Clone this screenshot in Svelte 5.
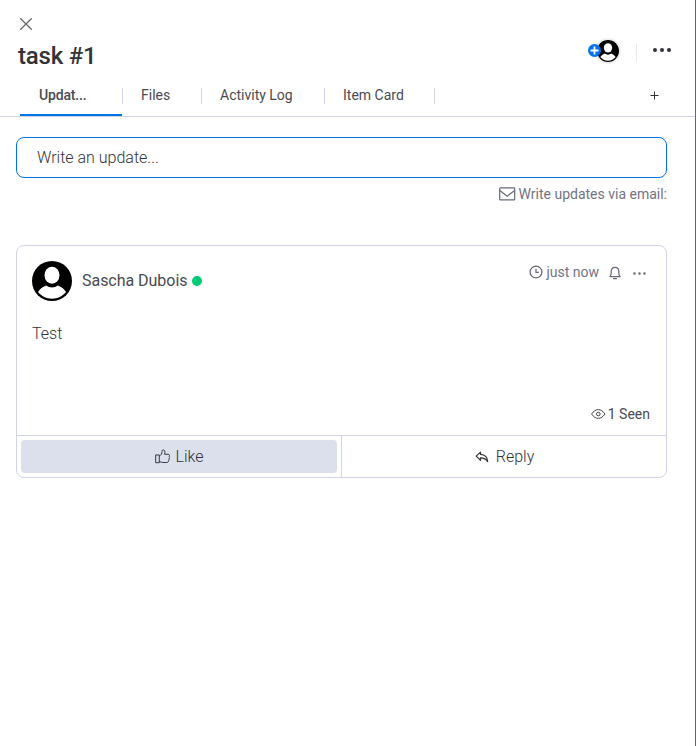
<script>
  const tabs = [
    { label: 'Updat...', width: 103, active: true },
    { label: 'Files', width: 79 },
    { label: 'Activity Log', width: 123 },
    { label: 'Item Card', width: 110 }
  ];
</script>

{#snippet avatar(size)}
  <svg class="avatar" width={size} height={size} viewBox="0 0 40 40">
    <circle cx="20" cy="20" r="20" fill="#000" />
    <ellipse cx="20" cy="14.3" rx="7.5" ry="8.5" fill="#fff" />
    <path d="M6 31C8.2 28 10.5 26 14 24.6Q20 28.6 26 24.6C29.500 26 31.800 28 34 31C30.500 35.300 25.500 37.700 20 37.700S9.500 35.300 6 31Z" fill="#fff" />
  </svg>
{/snippet}

<main class="panel">
  <header>
    <button class="close" aria-label="Close">
      <svg width="12" height="12" viewBox="0 0 12 12"><path d="M.3.3 11.700 11.700M11.700.3.3 11.700" stroke="#676767" stroke-width="1.250" /></svg>
    </button>
    <div class="title-row">
      <h1>task #1</h1>
      <div class="people">
        <span class="ring">{@render avatar(22)}</span>
        <svg class="add" width="13" height="13" viewBox="0 0 13 13"><circle cx="6.500" cy="6.500" r="6.500" fill="#0073ea" /><path d="M6.500 2.500v8M2.500 6.500h8" stroke="#fff" stroke-width="1.800" /></svg>
      </div>
      <span class="rule"></span>
      <svg class="more" width="18" height="4" viewBox="0 0 18 4" fill="#323338"><circle cx="2" cy="2" r="2" /><circle cx="9" cy="2" r="2" /><circle cx="16" cy="2" r="2" /></svg>
    </div>
  </header>

  <nav>
    {#each tabs as tab}
      <div class="tab" class:active={tab.active} style="width: {tab.width}px"><span>{tab.label}</span></div>
    {/each}
    <svg class="plus" width="9" height="9" viewBox="0 0 9 9"><path d="M4.500.5v8M.5 4.500h8" stroke="#323338" stroke-width="1" /></svg>
  </nav>

  <div class="content">
    <div class="composer">Write an update...</div>
    <div class="email">
      <svg width="17" height="14" viewBox="0 0 17 14" fill="none" stroke="#676879" stroke-width="1.200" stroke-linejoin="round"><rect x=".7" y=".9" width="15" height="12" rx=".7" /><path d="M.8 3.500 8.200 9.200 15.700 3.500" /></svg>
      <span>Write updates via email:</span>
    </div>

    <article>
      <div class="post">
        <div class="post-head">
          {@render avatar(40)}
          <span class="name">Sascha Dubois</span>
          <span class="online"></span>
          <div class="meta">
            <svg width="14" height="14" viewBox="0 0 14 14" fill="none" stroke="#676879" stroke-width="1.250"><circle cx="7" cy="7" r="5.900" /><path d="M7 3.800V7.300H9.800" /></svg>
            <span class="time">just now</span>
            <svg class="bell" width="12" height="14" viewBox="0 0 12 14" fill="none" stroke="#676879" stroke-width="1.250" stroke-linejoin="round"><path d="M.9 10.500C1.900 9.500 2.200 8.500 2.200 7V5.400C2.200 3 3.700 1.400 6 1.400S9.800 3 9.800 5.400V7C9.800 8.500 10.100 9.500 11.100 10.500Z" /><path d="M4.500 12.500H7.500" stroke-linecap="round" /></svg>
            <svg class="dots" width="13" height="3" viewBox="0 0 13 3" fill="#676879"><circle cx="1.500" cy="1.500" r="1.200" /><circle cx="6.500" cy="1.500" r="1.200" /><circle cx="11.500" cy="1.500" r="1.200" /></svg>
          </div>
        </div>
        <p>Test</p>
        <div class="seen">
          <svg width="15" height="10" viewBox="0 0 15 10" fill="none" stroke="#323338" stroke-width=".9"><path d="M.6 5C2.500 2.200 4.700.6 7.300.6S12 2.200 13.900 5C12 7.800 9.900 9.400 7.300 9.400S2.500 7.800.6 5Z" /><circle cx="7.300" cy="5" r="1.800" /></svg>
          <span>1 Seen</span>
        </div>
      </div>
      <footer>
        <div class="action like">
          <button class="liked">
            <svg width="15" height="15" viewBox="0 0 15.500 15" fill="none" stroke="#323338" stroke-width="1" stroke-linejoin="round"><path d="M.7 5.900H4.400V13.900H.7ZM4.400 7.100C6.400 6 7.300 4.500 7.300 2.400C7.300 1 7.800.6 8.700.7C10.200.9 10.700 2.600 9.900 5.200H13.500C15 5.200 15.300 6.300 14.700 7.400C15.300 8.200 15.200 9.100 14.500 9.700C14.800 10.700 14.600 11.300 13.900 11.800C14 13.100 13.300 13.700 12.100 13.700H8C6.400 13.700 5.700 12.700 4.400 12.700" /></svg>
            <span>Like</span>
          </button>
        </div>
        <div class="action reply">
          <svg width="14" height="12" viewBox="0 0 14 12" fill="none" stroke="#323338" stroke-width="1.200" stroke-linejoin="round"><path d="M5.500 1.100 1.200 5.100 5.500 9.300V6.900C8.800 6.800 10.900 7.700 12.700 10.700C12.500 6.300 9.800 3.500 5.500 3.300Z" /></svg>
          <span>Reply</span>
        </div>
      </footer>
    </article>
  </div>
</main>

<style>
  :global(body) { background: #fff; }
  * { box-sizing: border-box; }
  svg { display: block; flex: none; }
  button { border: 0; padding: 0; background: none; font: inherit; color: inherit; }
  .panel { width: 696px; height: 746px; border-right: 1px solid #666; font-family: Roboto, sans-serif; font-size: 14px; color: #323338; overflow: hidden; }
  header { height: 75px; padding: 18px 23px 0 18px; }
  .close { display: block; margin-left: 2px; height: 12px; }
  .title-row { display: flex; align-items: center; height: 40px; }
  h1 { margin: 11px auto 0 0; font-size: 24px; line-height: 32px; font-weight: 500; letter-spacing: -.2px; }
  .people { position: relative; width: 33px; height: 26px; margin: 1px 15px 0 0; }
  .ring { position: absolute; right: 0; top: 0; padding: 2px; border-radius: 50%; background: #efefef; }
  .add { position: absolute; left: 0; top: 6px; }
  .rule { width: 1px; height: 18px; margin: 6px 16px 0 0; background: #e8e9ef; }
  .more { margin-right: 1px; }
  nav { display: flex; align-items: center; height: 42px; padding: 0 36px 0 20px; border-bottom: 1px solid #d0d4e4; }
  .tab { position: relative; height: 41px; padding-left: 18px; line-height: 41px; color: #4a4b51; }
  .tab.active { padding-left: 19px; font-weight: 500; letter-spacing: -.18px; }
  .tab::after { content: ''; position: absolute; right: 0; top: 13px; width: 1px; height: 16px; background: #d0d4e4; }
  .tab.active::before { content: ''; position: absolute; left: 0; right: 1px; bottom: 0; height: 2px; background: #0073ea; }
  .plus { margin-left: auto; margin-bottom: 1px; }
  .content { padding: 20px 28px 0 16px; }
  .composer { height: 41px; padding-left: 20px; border: 1px solid #0073ea; border-radius: 8px; font-size: 16px; line-height: 39px; font-weight: 300; }
  .email { display: flex; justify-content: flex-end; align-items: center; gap: 3px; height: 32px; color: #737483; }
  article { margin-top: 35px; height: 233px; border: 1px solid #d0d4e4; border-radius: 8px; font-size: 16px; }
  .post { height: 189px; padding: 15px 16px 0 15px; }
  .post-head { display: flex; align-items: center; height: 40px; }
  .name { margin-left: 10px; line-height: 22px; color: #4a4b51; letter-spacing: -.03px; }
  .online { width: 10px; height: 10px; margin-left: 4px; border-radius: 50%; background: #00ca72; }
  .meta { display: flex; align-items: center; margin: -18px 4px 0 auto; color: #737483; font-size: 14px; line-height: 16px; }
  .time { margin: 0 10px 0 3px; }
  .bell { margin-right: 12px; }
  .bell, .dots { position: relative; top: 1px; }
  p { margin: 21px 0 0; line-height: 24px; font-weight: 300; }
  .seen { display: flex; align-items: center; justify-content: flex-end; gap: 2px; margin-top: 58px; height: 20px; font-size: 14px; color: #4a4b51; }
  footer { display: flex; height: 42px; border-top: 1px solid #d0d4e4; font-weight: 300; }
  .action { display: flex; align-items: center; justify-content: center; }
  .like { width: 325px; padding: 4px; border-right: 1px solid #d0d4e4; }
  .liked { display: flex; align-items: center; justify-content: center; gap: 6px; width: 100%; height: 33px; border-radius: 4px; background: #dcdfec; }
  .reply { flex: 1; gap: 7px; padding-left: 1px; }
</style>
